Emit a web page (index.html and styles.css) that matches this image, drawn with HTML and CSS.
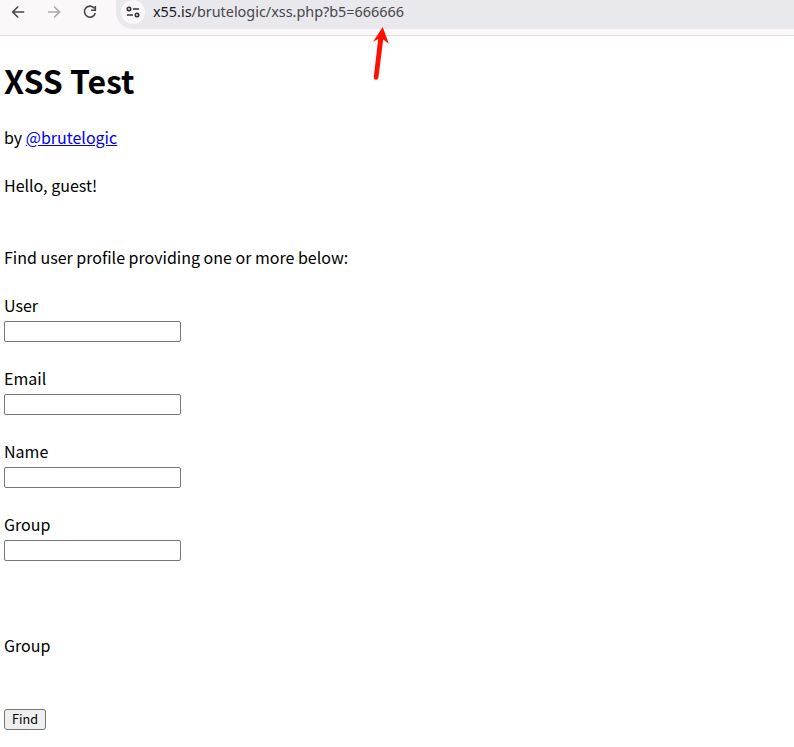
FILE: index.html
```html
<!DOCTYPE html>
<html lang="en">
<head>
<meta charset="utf-8">
<title>XSS Test</title>
<link rel="stylesheet" href="styles.css">
</head>
<body>
<header class="toolbar">
  <svg class="nav" width="100" height="24" viewBox="0 0 100 24" fill="none" stroke="#47474c" stroke-width="1.6">
    <path d="M24.2 12H13M18.2 6.5 12.7 12l5.5 5.5"/>
    <path stroke="#aaa8ab" d="M48 12h11.2M54 6.5l5.5 5.5-5.5 5.5"/>
    <path d="M94.4 8.4A5.5 5.5 0 1 0 95.3 13M95.3 6v4.2H91"/>
  </svg>
  <div class="address">
    <span class="site">
      <svg width="14" height="14" viewBox="0 0 14 14" fill="none" stroke="#303034" stroke-width="1.6">
        <circle cx="3" cy="4" r="1.7"/><path d="M7 4h6M1 10h6"/><circle cx="11" cy="10" r="1.7"/>
      </svg>
    </span>
    <span class="url"><span class="host">x55.is</span>/brutelogic/xss.php?b5=666666</span>
  </div>
</header>
<svg class="pointer" width="20" height="58" viewBox="0 0 20 58" fill="#ff1003">
  <path d="M12.7 1 18.8 17.7 13.2 13.5 8.4 51.5Q8 54 6 53.8 3.6 53.6 3.8 51L8.2 13 3 15.7Z"/>
</svg>
<main>
  <h1>XSS Test</h1>
  <p class="by">by <a href="#">@brutelogic</a></p>
  <p class="hello">Hello, guest!</p>
  <form>
    <p class="intro">Find user profile providing one or more below:</p>
    <label class="field">User<input type="text"></label>
    <label class="field">Email<input type="text"></label>
    <label class="field">Name<input type="text"></label>
    <label class="field">Group<input type="text"></label>
    <p class="extra">Group</p>
    <button type="button">Find</button>
  </form>
</main>
</body>
</html>
```
FILE: styles.css
```css
* { box-sizing: border-box; }
body {
  margin: 0;
  height: 747px;
  overflow: hidden;
  background: #fff;
  color: #000;
  font: 16px/24px "Noto Sans CJK SC", sans-serif;
}
.toolbar {
  display: flex;
  height: 36px;
  background: #fcf7f9;
  border-bottom: 1px solid #dfdde0;
}
.nav { flex: none; }
.address {
  display: flex;
  flex: 1;
  height: 29px;
  margin-left: 16px;
  padding-left: 5px;
  background: #e9e8ed;
  border-bottom-left-radius: 17px;
}
.site {
  display: flex;
  align-items: center;
  justify-content: center;
  width: 24px;
  height: 24px;
  border-radius: 12px;
  background: #fcf7f9;
}
.url {
  margin-left: 8px;
  color: #47474a;
  font: 14.4px/24px "Noto Sans", sans-serif;
  white-space: nowrap;
}
.host { color: #1c1b1e; }
.pointer { position: absolute; left: 370px; top: 26px; }
main { padding: 0 4px; }
h1 {
  margin: 19px 0 20px;
  font-size: 32px;
  line-height: 50px;
  font-weight: 700;
}
p { margin: 0; }
a { color: #0000ee; text-decoration: underline; }
.hello { margin-top: 24px; }
form { margin-top: 48px; }
.intro { margin-bottom: 24px; }
.field { display: block; height: 73px; }
input {
  display: block;
  width: 177px;
  height: 21px;
  margin: 4px 0 0;
  border: 1px solid #767676;
  border-radius: 2px;
  background: #fff;
}
.extra { margin-top: 48px; }
button {
  display: block;
  width: 42px;
  height: 21px;
  margin: 52px 0 0;
  padding: 0 0 2px;
  border: 1px solid #767676;
  border-radius: 3px;
  background: #efefef;
  color: #000;
  font: 12.6px/17px "Noto Sans CJK SC", sans-serif;
}
```
